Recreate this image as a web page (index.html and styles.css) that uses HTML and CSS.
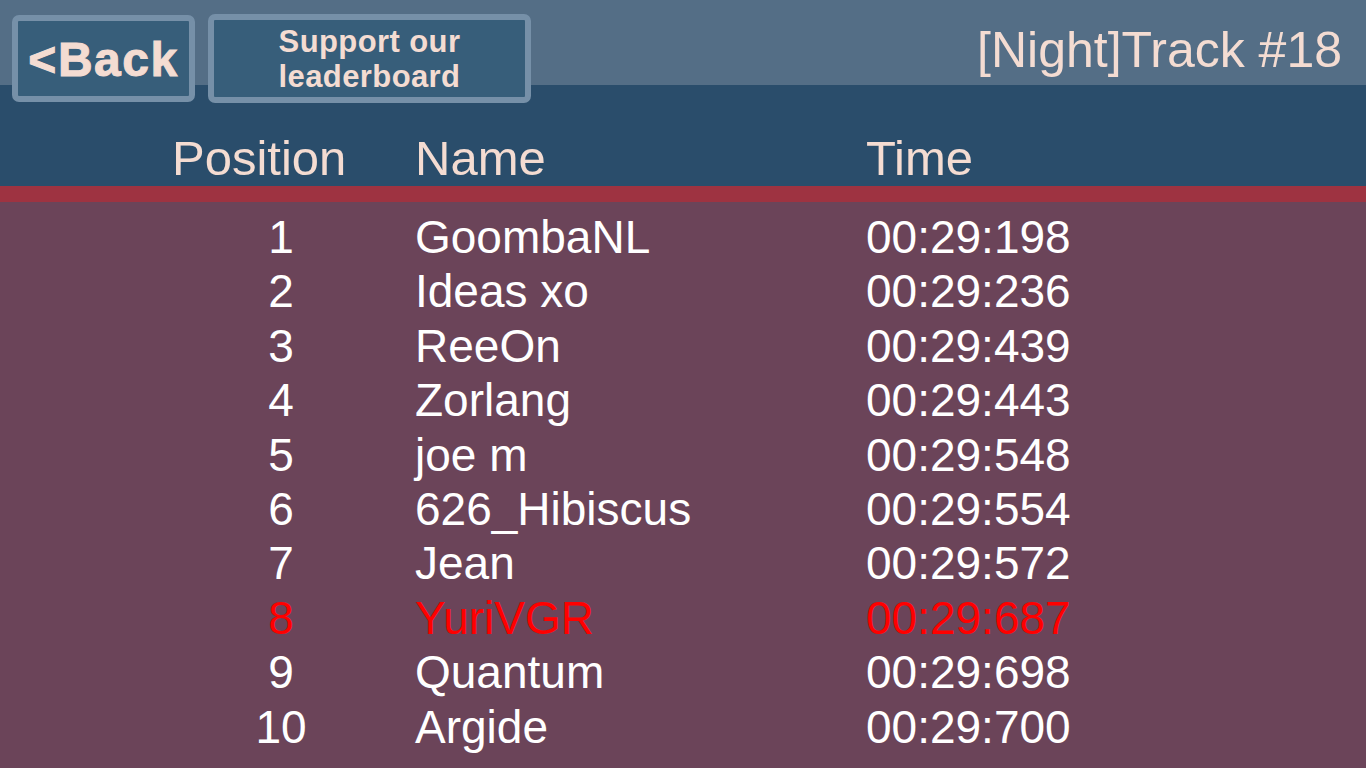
FILE: index.html
```html
<!DOCTYPE html>
<html>
<head>
<meta charset="utf-8">
<link rel="stylesheet" href="styles.css">
</head>
<body>
<div class="screen">
  <header class="head">
    <div class="topbar">
      <button class="btn btn-back">&lt;Back</button>
      <button class="btn btn-support">Support our<br>leaderboard</button>
      <div class="title">[Night]Track #18</div>
    </div>
    <div class="cols grid">
      <div class="c-pos">Position</div>
      <div class="c-name">Name</div>
      <div class="c-time">Time</div>
    </div>
  </header>
  <div class="stripe"></div>
  <main class="board">
    <div class="row grid"><div class="c-pos">1</div><div class="c-name">GoombaNL</div><div class="c-time">00:29:198</div></div>
    <div class="row grid"><div class="c-pos">2</div><div class="c-name">Ideas xo</div><div class="c-time">00:29:236</div></div>
    <div class="row grid"><div class="c-pos">3</div><div class="c-name">ReeOn</div><div class="c-time">00:29:439</div></div>
    <div class="row grid"><div class="c-pos">4</div><div class="c-name">Zorlang</div><div class="c-time">00:29:443</div></div>
    <div class="row grid"><div class="c-pos">5</div><div class="c-name">joe m</div><div class="c-time">00:29:548</div></div>
    <div class="row grid"><div class="c-pos">6</div><div class="c-name">626_Hibiscus</div><div class="c-time">00:29:554</div></div>
    <div class="row grid"><div class="c-pos">7</div><div class="c-name">Jean</div><div class="c-time">00:29:572</div></div>
    <div class="row grid me"><div class="c-pos">8</div><div class="c-name">YuriVGR</div><div class="c-time">00:29:687</div></div>
    <div class="row grid"><div class="c-pos">9</div><div class="c-name">Quantum</div><div class="c-time">00:29:698</div></div>
    <div class="row grid"><div class="c-pos">10</div><div class="c-name">Argide</div><div class="c-time">00:29:700</div></div>
  </main>
</div>
</body>
</html>
```

FILE: styles.css
```css
html, body {
  margin: 0;
  padding: 0;
}
body {
  width: 1366px;
  height: 768px;
  overflow: hidden;
  font-family: "Liberation Sans", Arial, sans-serif;
  background: #6b4459;
}
.screen {
  display: flex;
  flex-direction: column;
  height: 768px;
}
.head {
  height: 186px;
  background: linear-gradient(to bottom, #546e86 0, #546e86 85px, #2a4d6b 85px, #2a4d6b 100%);
  display: flex;
  flex-direction: column;
}
.topbar {
  display: flex;
  align-items: flex-start;
  padding: 15px 24px 0 12px;
  gap: 13px;
}
.btn {
  box-sizing: border-box;
  margin: 0;
  border: 6px solid #7690a8;
  border-radius: 7px;
  background: #375e7a;
  color: #f4dcd2;
  font-family: "Liberation Sans", Arial, sans-serif;
  font-weight: bold;
  display: flex;
  align-items: center;
  justify-content: center;
  padding: 0;
}
.btn-back {
  width: 183px;
  height: 87px;
  font-size: 48px;
  line-height: 1;
  letter-spacing: 1.5px;
  -webkit-text-stroke: 1px #f4dcd2;
  padding-top: 3px;
}
.btn-support {
  width: 323px;
  height: 89px;
  margin-top: -1px;
  font-size: 31px;
  line-height: 35px;
  letter-spacing: 0.4px;
  text-align: center;
  padding-top: 1px;
}
.title {
  margin-left: auto;
  margin-top: 7px;
  font-size: 50px;
  line-height: 56px;
  color: #f4dcd2;
  white-space: nowrap;
}
.grid {
  display: grid;
  grid-template-columns: 218px 426px 1fr;
  column-gap: 25px;
  padding-left: 172px;
}
.cols {
  margin-top: 28px;
  font-size: 49px;
  line-height: 54px;
  color: #f4dcd2;
}
.cols .c-pos {
  text-align: left;
}
.stripe {
  height: 16px;
  background: #9e3341;
}
.board {
  padding-top: 8px;
  color: #ffffff;
}
.row {
  font-size: 46px;
  line-height: 54.4px;
  height: 54.4px;
}
.row .c-pos {
  text-align: center;
}
.row.me {
  color: #ff0000;
}
```
